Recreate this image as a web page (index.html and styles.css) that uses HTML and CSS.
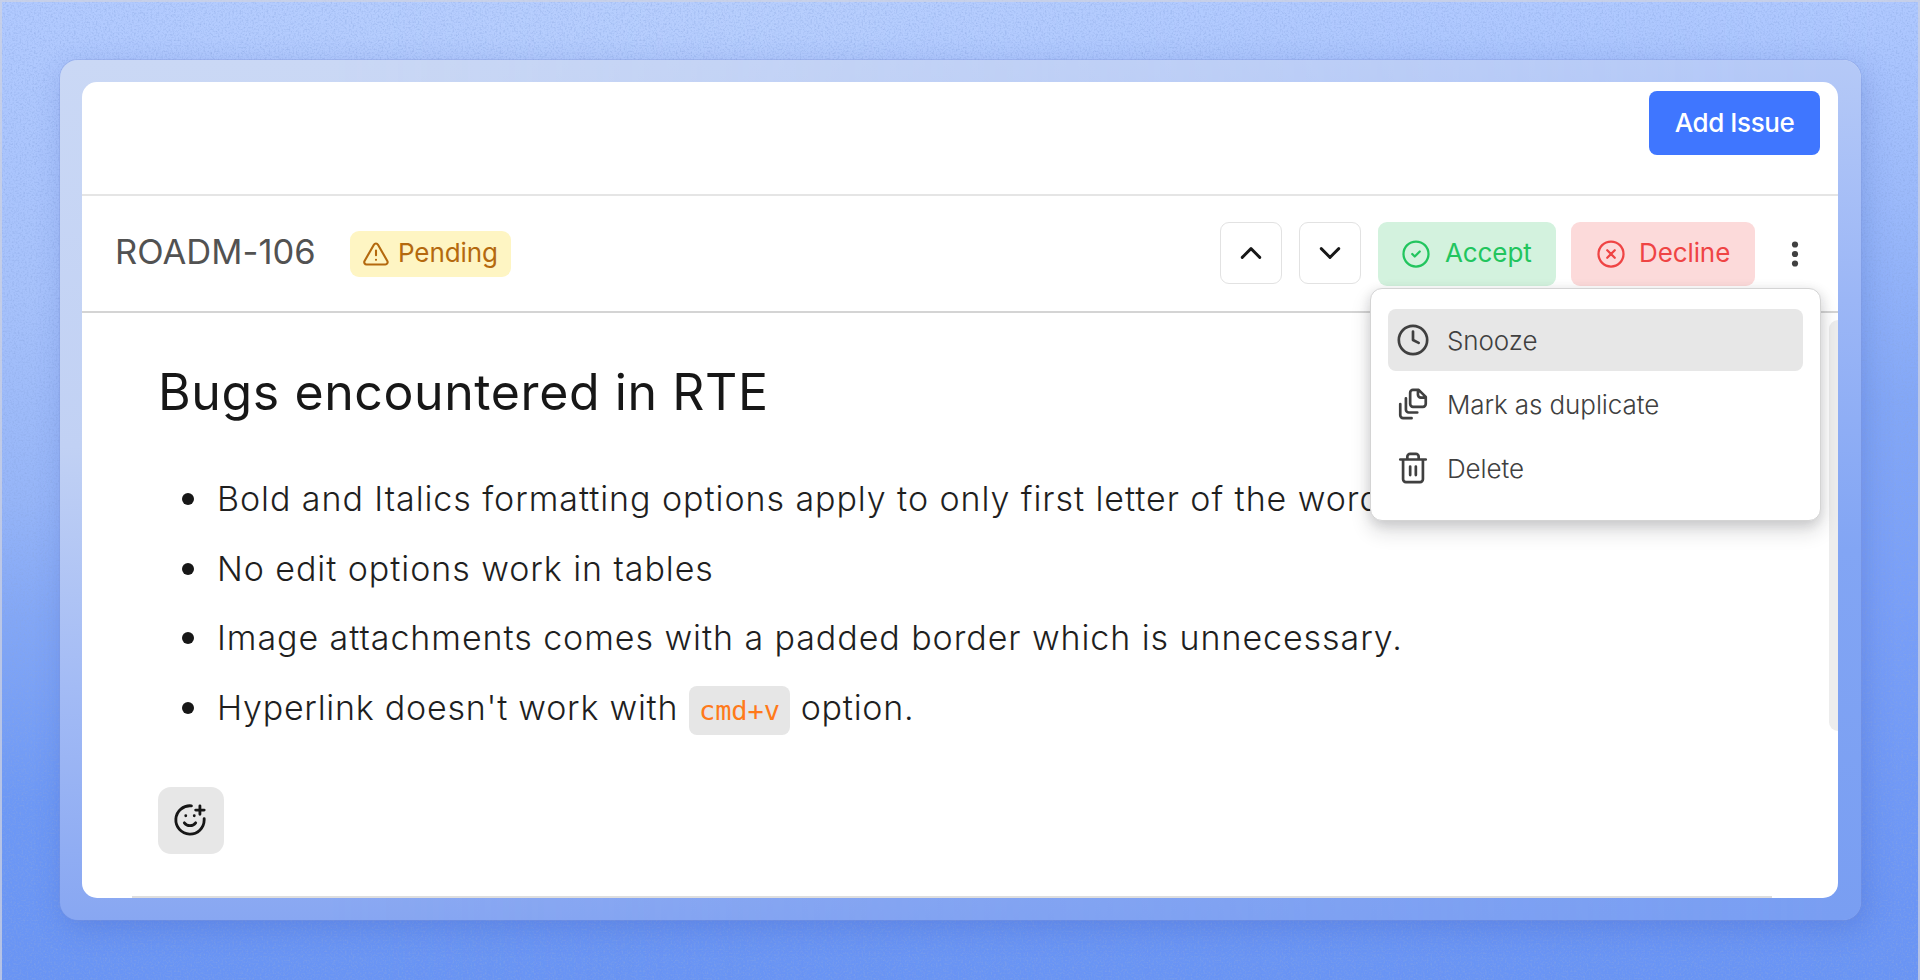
FILE: index.html
```html
<!DOCTYPE html>
<html lang="en">
<head>
<meta charset="utf-8">
<title>Inbox issue</title>
<link rel="stylesheet" href="styles.css">
</head>
<body>
<div class="backdrop">
  <svg class="grain" aria-hidden="true"><filter id="grain"><feTurbulence type="fractalNoise" baseFrequency="0.55" numOctaves="2" seed="4"/><feColorMatrix values="0 0 0 0 .25  0 0 0 0 .38  0 0 0 0 .75  1.6 0 0 0 -.72"/></filter><rect width="100%" height="100%" filter="url(#grain)"/></svg>
  <div class="frame">
    <main class="window">
      <header class="topbar"><button class="add">Add Issue</button></header>
      <div class="toolbar">
        <span class="issue-id">ROADM-106</span>
        <span class="badge"><svg width="28" height="28" viewBox="0 0 24 24"><path d="m21.7 18-8-14a2 2 0 0 0-3.5 0l-8 14A2 2 0 0 0 4 21h16a2 2 0 0 0 1.700-3ZM12 9v4M12 17h.01"/></svg><span class="label">Pending</span></span>
        <div class="actions">
          <button class="nav"><svg width="30" height="30" viewBox="0 0 24 24"><path d="m5 15.500 7-7 7 7"/></svg></button>
          <button class="nav"><svg width="30" height="30" viewBox="0 0 24 24"><path d="m5 8.500 7 7 7-7"/></svg></button>
          <button class="act accept"><svg width="30" height="30" viewBox="0 0 24 24"><circle cx="12" cy="12" r="10"/><path d="m9 12 2 2 4-4"/></svg><span class="label">Accept</span></button>
          <button class="act decline"><svg width="30" height="30" viewBox="0 0 24 24"><circle cx="12" cy="12" r="10"/><path d="m15 9-6 6M9 9l6 6"/></svg><span class="label">Decline</span></button>
          <div class="more">
            <svg class="dots" width="8" height="28" viewBox="0 0 8 28"><circle cx="4" cy="4.500" r="3.100"/><circle cx="4" cy="14" r="3.100"/><circle cx="4" cy="23.500" r="3.100"/></svg>
            <div class="menu">
              <div class="item active"><svg width="34" height="34" viewBox="0 0 24 24"><circle cx="12" cy="12" r="10"/><path d="M12 6v6l4 2"/></svg>Snooze</div>
              <div class="item"><svg width="34" height="34" viewBox="0 0 24 24"><path d="M16 2h-4a2 2 0 0 0-2 2v8a2 2 0 0 0 2 2h7a2 2 0 0 0 2-2V7ZM15.500 2v3.500a2 2 0 0 0 2 2H21M7 8v8a2 2 0 0 0 2 2h6M3 12v8a2 2 0 0 0 2 2h6"/></svg>Mark as duplicate</div>
              <div class="item"><svg width="34" height="34" viewBox="0 0 24 24"><path d="M3 6h18M19 6v14a2 2 0 0 1-2 2H7a2 2 0 0 1-2-2V6M8 6V4a2 2 0 0 1 2-2h4a2 2 0 0 1 2 2v2M10 11v6M14 11v6"/></svg>Delete</div>
            </div>
          </div>
        </div>
      </div>
      <article class="content">
        <h1>Bugs encountered in RTE</h1>
        <ul>
          <li>Bold and Italics formatting options apply to only first letter of the word.</li>
          <li>No edit options work in tables</li>
          <li>Image attachments comes with a padded border which is unnecessary.</li>
          <li class="tight">Hyperlink doesn't work with <code>cmd+v</code> option.</li>
        </ul>
        <button class="react"><svg width="34" height="34" viewBox="0 0 24 24"><path d="M22 11v1a10 10 0 1 1-9-10M8 14s1.500 2 4 2 4-2 4-2M9 9h.01M15 9h.01M16 5h6M19 2v6"/></svg></button>
        <div class="rule"></div>
        <div class="scrollbar"></div>
      </article>
    </main>
  </div>
</div>
</body>
</html>
```
FILE: styles.css
```css
* { box-sizing: border-box; }
body { margin: 0; overflow: hidden; font-family: Inter, "Liberation Sans", sans-serif; }
button { font: inherit; border: 0; margin: 0; padding: 0; }
svg { fill: none; stroke: currentColor; stroke-width: 2; stroke-linecap: round; stroke-linejoin: round; flex: none; }

.backdrop {
  position: relative;
  width: 1920px;
  height: 980px;
  padding: 60px 59px 59px 60px;
  overflow: hidden;
  background:
    radial-gradient(ellipse 900px 300px at 42% 0, rgba(195, 215, 252, .6), rgba(195, 215, 252, 0)),
    linear-gradient(180deg, #b0c9ff 0, #a7c2fb 30%, #96b5f8 51%, #83a7f6 63%, #6d98f5 82%, #6994f4 100%);
}
.backdrop::before {
  content: "";
  position: absolute;
  inset: 0;
  background: linear-gradient(180deg, #b0c9ff 0, #9cbafb 20%, #83a7f7 41%, #799ff8 61%, #6b95f5 92%, #6994f4 100%);
  mask-image: linear-gradient(90deg, transparent 20%, #000 98%);
}
.backdrop::after {
  content: "";
  position: absolute;
  inset: 0;
  border: 2px solid rgba(205, 210, 225, .75);
  border-bottom: 0;
}
.grain { position: absolute; inset: 0; width: 100%; height: 100%; stroke: none; opacity: .75; }

.frame {
  position: relative;
  height: 860px;
  padding: 22px;
  border-radius: 18px;
  background: linear-gradient(180deg, #cad8f5 0, #c1d1f4 45%, #a3bbf5 73%, #88a7f2 100%);
  box-shadow: 0 0 0 1px rgba(130, 150, 215, .3), 4px 8px 28px rgba(50, 80, 180, .25);
}
.frame::before {
  content: "";
  position: absolute;
  inset: 0;
  border-radius: 18px;
  background: linear-gradient(180deg, #b5c9f7 0, #9bb6f6 28%, #82a5f4 57%, #799ef2 100%);
  mask-image: linear-gradient(90deg, transparent 15%, #000 98%);
}
.window { position: relative; height: 815.500px; width: 1756px; border-radius: 15px; background: #fff; }

.topbar { display: flex; justify-content: flex-end; height: 114px; padding: 8.500px 18px 0 0; border-bottom: 2px solid #e5e5e5; }
.add { width: 171px; height: 64px; border-radius: 8px; background: #3f76ff; color: #fff; font-size: 26px; font-weight: 500; letter-spacing: -.4px; }

.toolbar { display: flex; align-items: center; height: 117px; padding: 0 39px 0 33px; border-bottom: 2px solid #d4d4d4; }
.issue-id { width: 235px; margin-top: -4px; font-size: 34.500px; letter-spacing: .05px; color: #525252; }
.badge { display: flex; align-items: center; gap: 8px; width: 161px; height: 46px; padding-left: 12px; border-radius: 9px; background: #fef5c3; color: #b4690e; font-size: 26px; }
.badge svg { stroke-width: 1.8; }
.label { margin-top: -3px; letter-spacing: -.1px; }
.actions { display: flex; align-items: center; margin-left: auto; }
.nav { display: grid; place-items: center; width: 62px; height: 62px; margin: -2px 17px 0 0; border: 1.500px solid #e2e2e2; border-radius: 9px; background: #fff; color: #171717; }
.nav svg { stroke-width: 2.300; }
.act { display: flex; align-items: center; gap: 14px; height: 64px; padding-left: 23px; border-radius: 9px; font-size: 26px; }
.act svg { stroke-width: 1.800; }
.accept { width: 178px; background: #d3f2de; color: #22c55e; }
.decline { width: 184px; margin-left: 15px; padding-left: 25px; gap: 13px; background: #fcdada; color: #ef4444; }
.more { position: relative; margin-left: 36px; width: 8px; height: 28px; }
.dots { display: block; fill: #404040; stroke: none; }

.menu {
  position: absolute;
  top: 48.500px;
  right: -22px;
  z-index: 2;
  width: 451px;
  height: 233px;
  padding: 20px 17px;
  border: 1.500px solid #d4d4d4;
  border-radius: 12px;
  background: #fff;
  box-shadow: 0 10px 20px rgba(23, 23, 33, .16), 0 3px 12px rgba(23, 23, 33, .12);
}
.item { display: flex; align-items: center; gap: 17px; height: 62px; margin-bottom: 2px; padding-left: 8px; border-radius: 8px; font-size: 26px; font-weight: 300; letter-spacing: -.1px; color: #404040; }
.item svg { stroke-width: 1.900; }
.active { background: #e7e7e7; }

.content { position: relative; height: 584.500px; padding: 47px 0 0 76px; color: #171717; }
h1 { margin: 0; font-size: 50px; line-height: 64px; font-weight: 400; letter-spacing: .6px; }
ul { margin: 40px 0 0; padding: 0 0 0 59px; list-style: none; }
li { position: relative; height: 69.700px; line-height: 69px; font-size: 34px; font-weight: 300; letter-spacing: .93px; white-space: nowrap; color: #1f1f1f; }
.tight { letter-spacing: .75px; }
li::before { content: ""; position: absolute; left: -35px; top: 29px; width: 12px; height: 12px; border-radius: 50%; background: #171717; }
code { display: inline-block; height: 49px; padding: 0 10.500px; line-height: 50px; border-radius: 8px; background: #e6e6e6; color: #ff7a1a; font-family: "DejaVu Sans Mono", monospace; font-size: 27px; font-weight: 400; letter-spacing: -.1px; }
.react { display: grid; place-items: center; width: 66px; height: 67px; margin-top: 44px; padding-right: 2px; border-radius: 13px; background: #e7e7e7; color: #171717; }
.rule { position: absolute; left: 50px; right: 66px; bottom: 0; height: 2px; background: #dedede; }
.scrollbar { position: absolute; right: 0; top: 7px; width: 9px; height: 411px; border-radius: 9px 0 0 9px; background: #ededed; }
```
